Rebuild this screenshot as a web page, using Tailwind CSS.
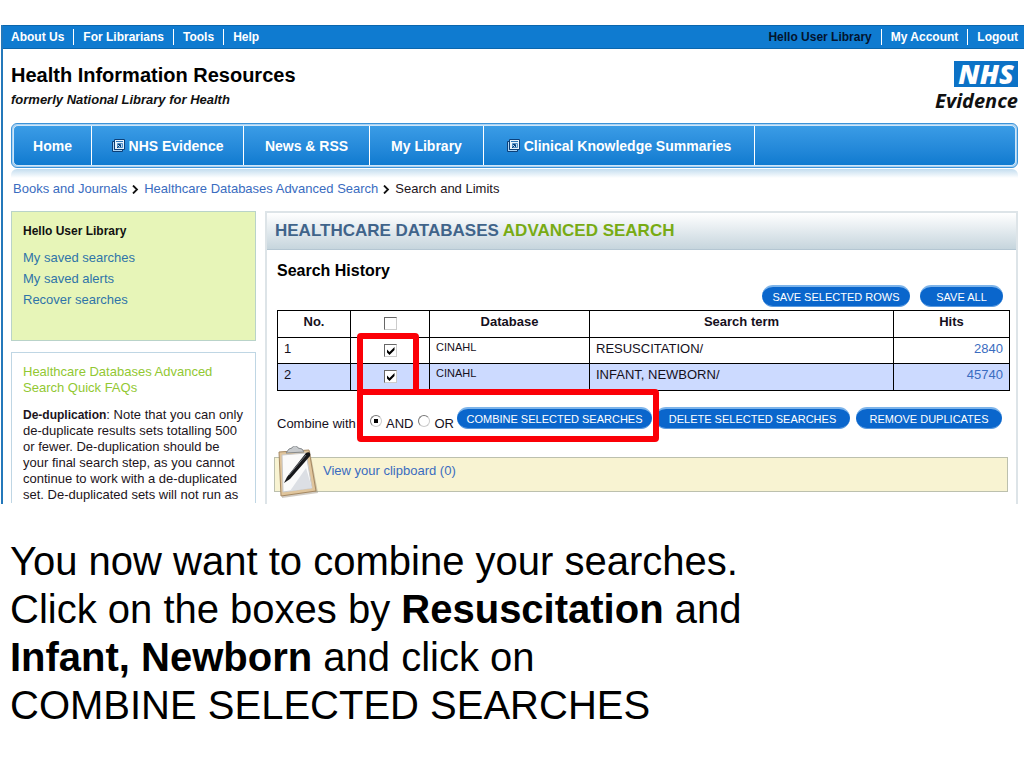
<!DOCTYPE html>
<html lang="en">
<head>
    <meta charset="UTF-8">
    <meta name="viewport" content="width=device-width, initial-scale=1.0">
    <title>Healthcare Databases Advanced Search</title>
    <script src="https://cdn.jsdelivr.net/npm/@tailwindcss/browser@4"></script>
</head>
<body class="bg-white text-black font-['Liberation_Sans',Arial,sans-serif] text-[13px] leading-4">
    <div class="mt-[25px] ml-px border-l-2 border-[#2478ba]">
        <!-- Top bar -->
        <div class="flex h-[24px] items-center justify-between border-y border-[#0b66ac] bg-[#0f7bd0] pl-2 pr-1.5 text-[12px] font-bold text-white">
            <nav class="flex items-center">
                <a href="#" class="border-r border-white pr-[9px]">About Us</a>
                <a href="#" class="border-r border-white px-[9px]">For Librarians</a>
                <a href="#" class="border-r border-white px-[9px]">Tools</a>
                <a href="#" class="pl-[9px]">Help</a>
            </nav>
            <div class="flex items-center">
                <span class="border-r border-white pr-[9px] text-[#03142e]">Hello User Library</span>
                <a href="#" class="border-r border-white px-[9px]">My Account</a>
                <a href="#" class="pl-[9px]">Logout</a>
            </div>
        </div>

        <!-- Heading and logo -->
        <header class="flex h-[74px] justify-between pl-2 pr-1.5">
            <div class="pt-3.5">
                <h1 class="text-[20px] font-bold leading-6">Health Information Resources</h1>
                <p class="mt-[5px] font-bold italic text-[#111]">formerly National Library for Health</p>
            </div>
            <div class="flex flex-col items-end pt-3 font-['Open_Sans','Noto_Sans',sans-serif] font-bold italic">
                <div class="flex h-[26px] w-[64px] items-center justify-center bg-[#0c72c6] text-[27px] font-extrabold leading-6 text-white">NHS</div>
                <div class="text-[20px] leading-7 text-[#111]">Evidence</div>
            </div>
        </header>

        <!-- Main navigation -->
        <div class="pl-2 pr-1.5">
            <nav class="flex h-[45px] rounded-md border border-[#3c93d8] bg-[#a9d2f3] p-px">
                <div class="flex grow rounded-[5px] border border-[#cfe6f8] bg-linear-to-b from-[#3a9ce6] to-[#0f7bd0] text-[14px] font-bold text-white">
                    <a href="#" class="flex w-[78px] items-center justify-center border-r border-white">Home</a>
                    <a href="#" class="flex w-[152px] items-center justify-center gap-1 border-r border-white">
                        <svg class="size-[13px]" viewBox="0 0 13 13"><path d="M.5 2.500h2v8h8v2H.5z" fill="#a9d2f3" stroke="#0b3f78"/><path d="M2.500.500h10v10h-10z" fill="#e8f3fc" stroke="#0b3f78"/><path d="M4 2.500h7" stroke="#2c74b8"/><path d="M5.500 4.500h5v4h-5z" fill="#bcdcf5" stroke="#4f90c8"/><path d="M5 9l3-3M6 5.500h2.500V8" fill="none" stroke="#0b3f78"/></svg>
                        NHS Evidence
                    </a>
                    <a href="#" class="flex w-[126px] items-center justify-center border-r border-white">News &amp; RSS</a>
                    <a href="#" class="flex w-[114px] items-center justify-center border-r border-white">My Library</a>
                    <a href="#" class="flex w-[271px] items-center justify-center gap-1 border-r border-white">
                        <svg class="size-[13px]" viewBox="0 0 13 13"><path d="M.5 2.500h2v8h8v2H.5z" fill="#a9d2f3" stroke="#0b3f78"/><path d="M2.500.500h10v10h-10z" fill="#e8f3fc" stroke="#0b3f78"/><path d="M4 2.500h7" stroke="#2c74b8"/><path d="M5.500 4.500h5v4h-5z" fill="#bcdcf5" stroke="#4f90c8"/><path d="M5 9l3-3M6 5.500h2.500V8" fill="none" stroke="#0b3f78"/></svg>
                        Clinical Knowledge Summaries
                    </a>
                </div>
            </nav>
            <div class="mt-px h-[9px] rounded-t-md bg-linear-to-b from-[#c3ddef] to-white"></div>
        </div>

        <!-- Breadcrumb -->
        <div class="flex items-center gap-[5px] pl-2.5 pt-[3px] text-[#3a6cc0]">
            <a href="#">Books and Journals</a>
            <svg class="h-[9px] w-[7px]" viewBox="0 0 7 9"><path d="M1 .5l4 4-4 4" fill="none" stroke="#111" stroke-width="1.800"/></svg>
            <a href="#">Healthcare Databases Advanced Search</a>
            <svg class="h-[9px] w-[7px]" viewBox="0 0 7 9"><path d="M1 .5l4 4-4 4" fill="none" stroke="#111" stroke-width="1.800"/></svg>
            <span class="text-[#1c1420]">Search and Limits</span>
        </div>

        <div class="mt-3.5 flex gap-[9px] pl-2 pr-1.5">
            <!-- Sidebar -->
            <aside class="flex w-[245px] shrink-0 flex-col gap-[11px]">
                <section class="h-[130px] border border-[#b9d3c9] bg-[#e7f5b8] px-[11px] pt-[11px]">
                    <h2 class="text-[12px] font-bold text-[#111]">Hello User Library</h2>
                    <ul class="mt-[11px] flex flex-col gap-[5px] text-[#2f74a8]">
                        <li><a href="#">My saved searches</a></li>
                        <li><a href="#">My saved alerts</a></li>
                        <li><a href="#">Recover searches</a></li>
                    </ul>
                </section>
                <section class="border border-b-0 border-[#bfd6e4] pl-[11px] pt-[11px] text-[#1c1420]">
                    <h2 class="text-[#92c832]">Healthcare Databases Advanced<br>Search Quick FAQs</h2>
                    <p class="mt-[11px] whitespace-nowrap"><b class="text-[12px]">De-duplication</b>: Note that you can only<br>de-duplicate results sets totalling 500<br>or fewer. De-duplication should be<br>your final search step, as you cannot<br>continue to work with a de-duplicated<br>set. De-duplicated sets will not run as</p>
                </section>
            </aside>

            <!-- Search panel -->
            <main class="grow border-2 border-b-0 border-[#dde4e8]">
                <h2 class="flex h-[37px] items-center gap-1 border-b border-[#b4c6d2] bg-linear-to-b from-white to-[#c6d5dd] pl-2 text-[17px] font-bold text-[#40648a]">HEALTHCARE DATABASES <span class="text-[#78ab14]">ADVANCED SEARCH</span></h2>
                <div class="pl-2.5 pr-1.5">
                    <h3 class="pt-[11px] text-[16px] font-bold leading-5">Search History</h3>
                    <div class="mt-1 flex justify-end gap-2.5 pr-[7px] text-[11px] text-white">
                        <button class="h-[22px] w-[148px] rounded-full border-t-2 border-b border-t-[#7db4ea] border-b-[#5b9be0] bg-[#0a66cc]">SAVE SELECTED ROWS</button>
                        <button class="h-[22px] w-[83px] rounded-full border-t-2 border-b border-t-[#7db4ea] border-b-[#5b9be0] bg-[#0a66cc]">SAVE ALL</button>
                    </div>
                    <div class="relative mt-[3px]">
                        <table class="w-full table-fixed border-collapse text-[#15101c] [&_td]:border [&_td]:border-black [&_td]:px-1.5 [&_td]:pt-[3px] [&_td]:align-top [&_th]:border [&_th]:border-black [&_th]:pt-[3px] [&_th]:align-top">
                            <thead>
                                <tr class="h-[27px]">
                                    <th class="w-[73px]">No.</th>
                                    <th class="w-[79px]"><input type="checkbox" aria-label="Select all" class="mt-[3px] size-[13px] appearance-none border border-r-[#ccc] border-b-[#ccc] border-t-[#666] border-l-[#666] align-top"></th>
                                    <th class="w-[160px]">Database</th>
                                    <th>Search term</th>
                                    <th class="w-[116px]">Hits</th>
                                </tr>
                            </thead>
                            <tbody>
                                <tr class="h-[26px]">
                                    <td>1</td>
                                    <td class="text-center"><input type="checkbox" checked aria-label="Select search 1" class="mt-[3px] size-[13px] appearance-none border border-r-[#ccc] border-b-[#ccc] border-t-[#666] border-l-[#666] bg-white align-top"><svg class="pointer-events-none -ml-[13px] mt-[3px] inline size-[13px] align-top" viewBox="0 0 13 13"><path d="M3 5.500l2.500 2.500 5-5v3l-5 5-2.500-2.500z"/></svg></td>
                                    <td class="text-[11px]"><span class="block leading-3">CINAHL</span></td>
                                    <td>RESUSCITATION/</td>
                                    <td class="text-right"><a href="#" class="text-[#3a6cc0]">2840</a></td>
                                </tr>
                                <tr class="h-[27px] bg-[#ccdaff]">
                                    <td>2</td>
                                    <td class="text-center"><input type="checkbox" checked aria-label="Select search 2" class="mt-[3px] size-[13px] appearance-none border border-r-[#ccc] border-b-[#ccc] border-t-[#666] border-l-[#666] bg-white align-top"><svg class="pointer-events-none -ml-[13px] mt-[3px] inline size-[13px] align-top" viewBox="0 0 13 13"><path d="M3 5.500l2.500 2.500 5-5v3l-5 5-2.500-2.500z"/></svg></td>
                                    <td class="text-[11px]"><span class="block leading-3">CINAHL</span></td>
                                    <td>INFANT, NEWBORN/</td>
                                    <td class="text-right"><a href="#" class="text-[#3a6cc0]">45740</a></td>
                                </tr>
                            </tbody>
                        </table>
                        <!-- Highlight round the tick boxes -->
                        <div class="pointer-events-none absolute left-20 top-[23px] h-[62px] w-[62px] rounded-sm border-[6px] border-[#fb0007]"></div>
                    </div>

                    <div class="relative mt-4 flex items-start text-[#15101c]">
                        <span class="mt-[9px] w-[93px]">Combine with</span>
                        <label class="mt-[9px] flex gap-1"><input type="radio" name="op" checked class="-mt-px size-[12px] appearance-none rounded-full border border-t-[#777] border-l-[#777] border-r-[#ccc] border-b-[#ccc] bg-white bg-radial from-black from-30% to-white to-35%">AND</label>
                        <label class="ml-[5px] mt-[9px] flex gap-1"><input type="radio" name="op" class="-mt-px size-[12px] appearance-none rounded-full border border-t-[#777] border-l-[#777] border-r-[#ccc] border-b-[#ccc] bg-white">OR</label>
                        <div class="ml-auto flex pr-2 text-[11px] text-white">
                            <button class="h-[22px] w-[195px] rounded-full border-t-2 border-b border-t-[#7db4ea] border-b-[#5b9be0] bg-[#0a66cc]">COMBINE SELECTED SEARCHES</button>
                            <button class="ml-[3px] h-[22px] w-[195px] rounded-full border-t-2 border-b border-t-[#7db4ea] border-b-[#5b9be0] bg-[#0a66cc]">DELETE SELECTED SEARCHES</button>
                            <button class="ml-1.5 h-[22px] w-[146px] rounded-full border-t-2 border-b border-t-[#7db4ea] border-b-[#5b9be0] bg-[#0a66cc]">REMOVE DUPLICATES</button>
                        </div>
                        <!-- Highlight round the combine controls -->
                        <div class="pointer-events-none absolute -top-[18px] left-20 h-[53px] w-[302px] rounded-sm border-[6px] border-[#fb0007]"></div>
                    </div>
                </div>

                <!-- Clipboard -->
                <div class="relative ml-[7px] mr-2 mt-[25px] flex h-[35px] border border-[#bcc0ae] bg-[#f8f3d2] pl-12 pt-[5px]">
                    <svg class="absolute -top-3 left-0.5 h-[53px] w-[42px]" viewBox="0 0 42 53">
                        <path d="M4 8l29-3 8 42-36 5z" fill="#8b7d68" opacity=".4"/>
                        <path d="M2 6l30-2 7 41-35 5z" fill="#e0c59c" stroke="#a58862"/>
                        <path d="M5 9l24-2 6 35-29 4z" fill="#fafafa" stroke="#c9c9c9"/>
                        <path d="M29 22l6 20-22 3z" fill="#dcdfe4"/>
                        <path d="M9 7l3-4 3-1c1-3 5-3 6 0l4 1 2 3z" fill="#c7cacd" stroke="#85898c"/>
                        <path d="M7 37l3-6 19-24c3-2 5 0 4 3L13 33z" fill="#16171a"/>
                        <path d="M12 29l17-20" stroke="#70747a"/>
                    </svg>
                    <a href="#" class="text-[#3a6cc0]">View your clipboard (0)</a>
                </div>
                <div class="h-3"></div>
            </main>
        </div>
    </div>

    <p class="mt-[33px] pl-2.5 text-[40px] leading-12">You now want to combine your searches.<br>Click on the boxes by <b>Resuscitation</b> and<br><b>Infant, Newborn</b> and click on<br>COMBINE SELECTED SEARCHES</p>
</body>
</html>
